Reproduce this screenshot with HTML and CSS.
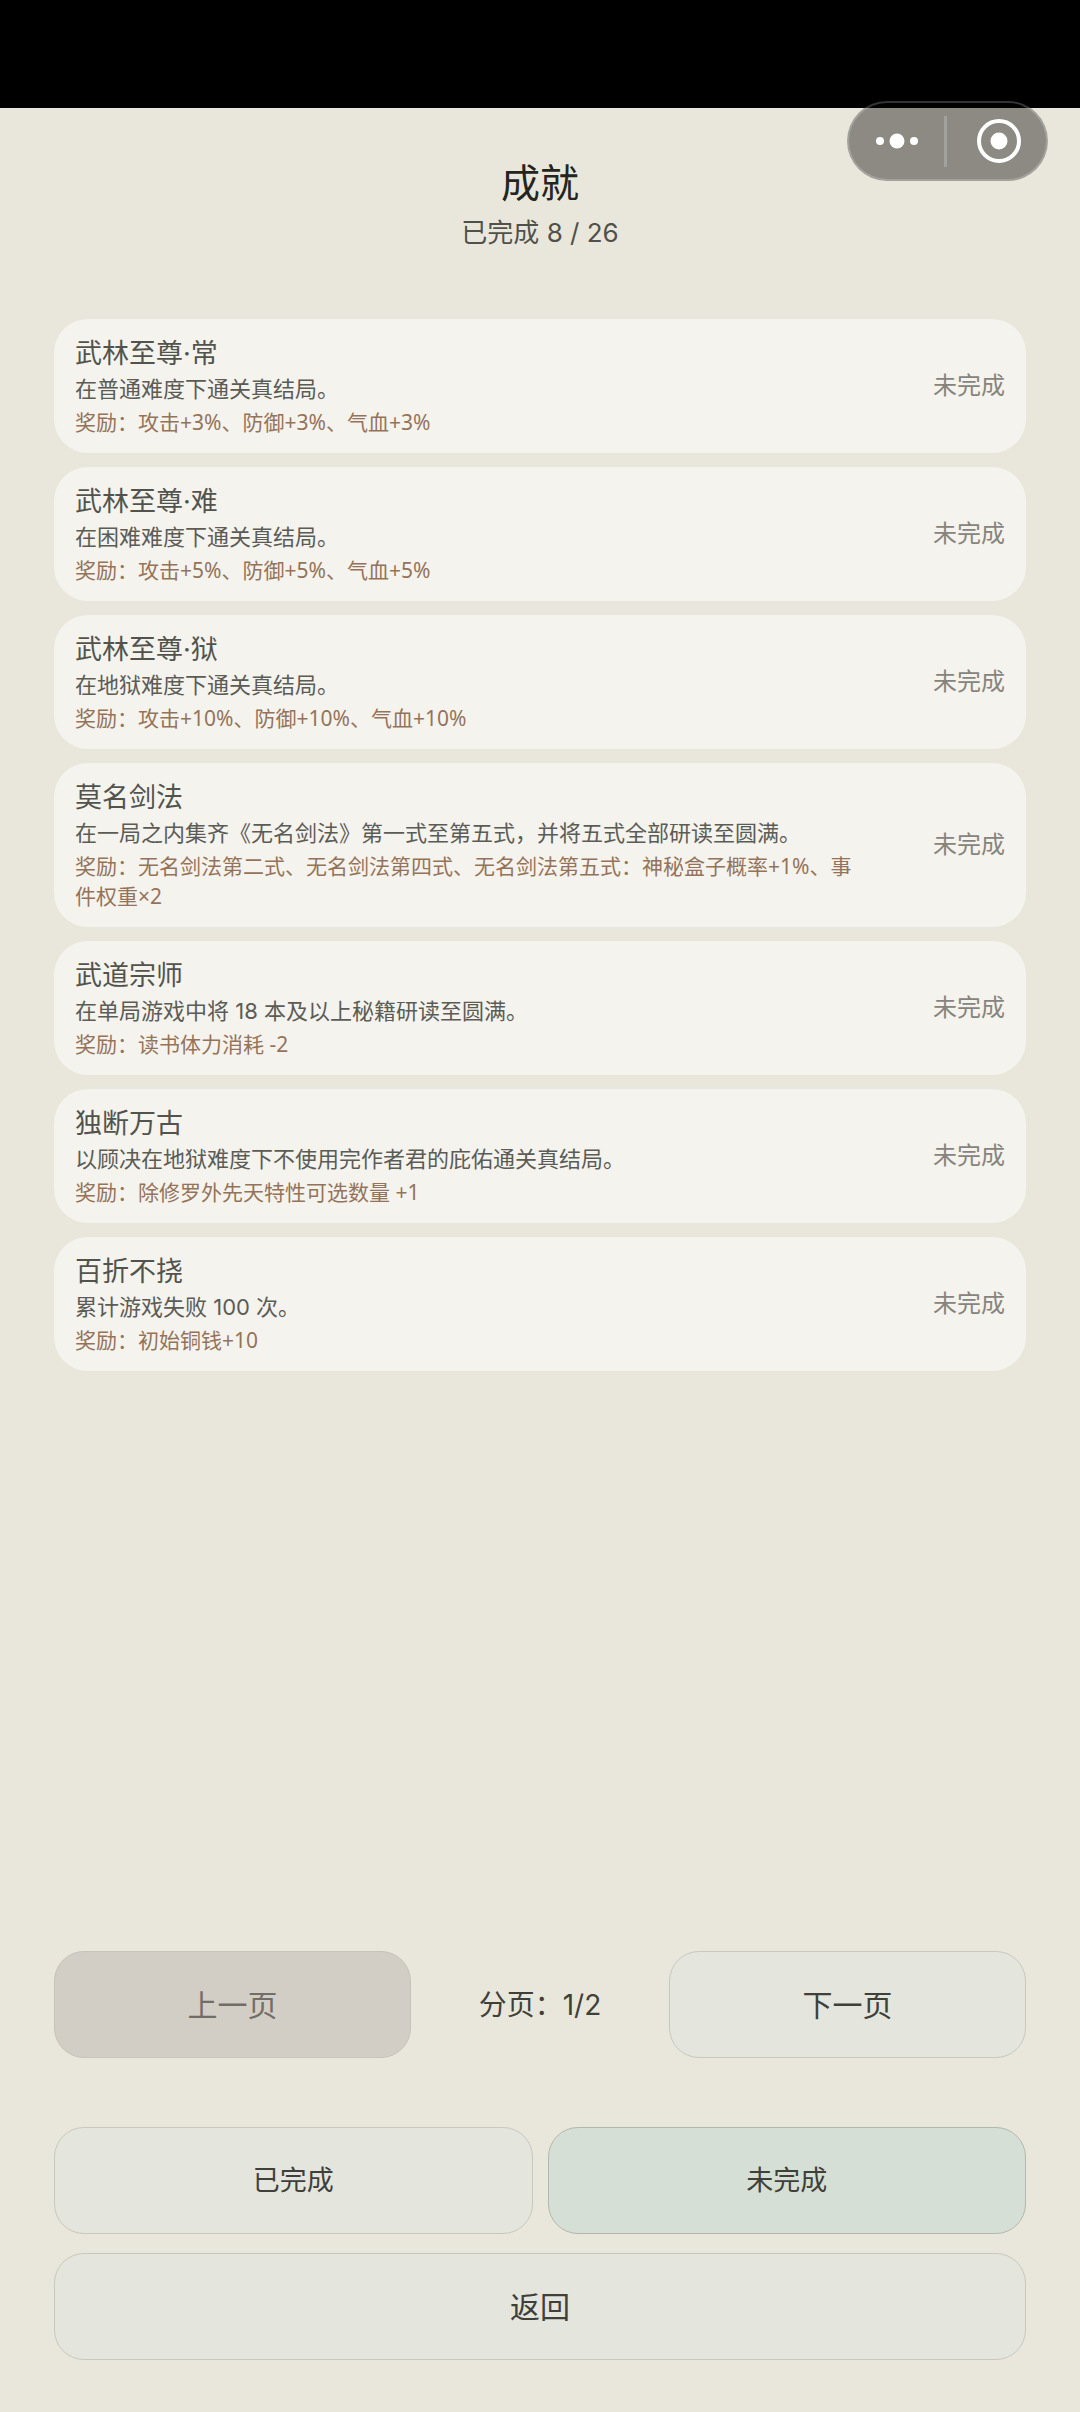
FILE: index.html
```
<!DOCTYPE html>
<html lang="zh-CN">
<head>
    <meta charset="UTF-8">
    <meta name="viewport" content="width=device-width, initial-scale=1.0">
    <title>成就</title>
    <link rel="stylesheet" href="styles.css">
</head>
<body>

<div class="status-bar"></div>

<!-- 小程序胶囊按钮 -->
<div class="capsule">
    <button class="capsule-btn" aria-label="更多">
        <svg width="44" height="16" viewBox="0 0 44 16" fill="#fff">
            <circle cx="5" cy="8" r="4"/>
            <circle cx="22" cy="8" r="7.5"/>
            <circle cx="39" cy="8" r="4"/>
        </svg>
    </button>
    <span class="capsule-line"></span>
    <button class="capsule-btn capsule-close" aria-label="关闭">
        <svg width="46" height="46" viewBox="0 0 46 46">
            <circle cx="23" cy="23" r="20" fill="none" stroke="#fff" stroke-width="4"/>
            <circle cx="23" cy="23" r="8.5" fill="#fff"/>
        </svg>
    </button>
</div>

<header class="header">
    <h1 class="page-title">成就</h1>
    <p class="progress">已完成 8 / 26</p>
</header>

<main class="achievement-list">
    <article class="card">
        <div class="card-info">
            <h2 class="card-title">武林至尊·常</h2>
            <p class="card-desc">在普通难度下通关真结局。</p>
            <p class="card-reward">奖励：攻击+3%、防御+3%、气血+3%</p>
        </div>
        <span class="card-status">未完成</span>
    </article>
    <article class="card">
        <div class="card-info">
            <h2 class="card-title">武林至尊·难</h2>
            <p class="card-desc">在困难难度下通关真结局。</p>
            <p class="card-reward">奖励：攻击+5%、防御+5%、气血+5%</p>
        </div>
        <span class="card-status">未完成</span>
    </article>
    <article class="card">
        <div class="card-info">
            <h2 class="card-title">武林至尊·狱</h2>
            <p class="card-desc">在地狱难度下通关真结局。</p>
            <p class="card-reward">奖励：攻击+10%、防御+10%、气血+10%</p>
        </div>
        <span class="card-status">未完成</span>
    </article>
    <article class="card">
        <div class="card-info">
            <h2 class="card-title">莫名剑法</h2>
            <p class="card-desc">在一局之内集齐《无名剑法》第一式至第五式，并将五式全部研读至圆满。</p>
            <p class="card-reward">奖励：无名剑法第二式、无名剑法第四式、无名剑法第五式：神秘盒子概率+1%、事件权重×2</p>
        </div>
        <span class="card-status">未完成</span>
    </article>
    <article class="card">
        <div class="card-info">
            <h2 class="card-title">武道宗师</h2>
            <p class="card-desc">在单局游戏中将 18 本及以上秘籍研读至圆满。</p>
            <p class="card-reward">奖励：读书体力消耗 -2</p>
        </div>
        <span class="card-status">未完成</span>
    </article>
    <article class="card">
        <div class="card-info">
            <h2 class="card-title">独断万古</h2>
            <p class="card-desc">以顾决在地狱难度下不使用完作者君的庇佑通关真结局。</p>
            <p class="card-reward">奖励：除修罗外先天特性可选数量 +1</p>
        </div>
        <span class="card-status">未完成</span>
    </article>
    <article class="card">
        <div class="card-info">
            <h2 class="card-title">百折不挠</h2>
            <p class="card-desc">累计游戏失败 100 次。</p>
            <p class="card-reward">奖励：初始铜钱+10</p>
        </div>
        <span class="card-status">未完成</span>
    </article>
</main>

<footer class="footer">
    <nav class="pager">
        <button class="btn" disabled>上一页</button>
        <span class="page-number">分页：1/2</span>
        <button class="btn">下一页</button>
    </nav>
    <div class="filters">
        <button class="btn btn-filter">已完成</button>
        <button class="btn btn-filter active">未完成</button>
    </div>
    <button class="btn btn-back">返回</button>
</footer>

</body>
</html>
```
FILE: styles.css
```
* {
    box-sizing: border-box;
    margin: 0;
    padding: 0;
}
body {
    display: flex;
    flex-direction: column;
    min-height: 100vh;
    background-color: #e9e7db;
    font-family: Inter, "Noto Sans CJK SC", sans-serif;
    color: #3f403a;
}
button {
    font-family: inherit;
    cursor: pointer;
}
.status-bar {
    height: 108px;
    background-color: #000000;
}

/* 悬浮在右上角的胶囊 */
.capsule {
    position: absolute;
    top: 101px;
    right: 32px;
    display: flex;
    align-items: center;
    width: 201px;
    height: 80px;
    border: 2px solid rgba(255, 255, 255, 0.2);
    border-radius: 40px;
    background-color: rgba(0, 0, 0, 0.4);
}
.capsule-btn {
    flex: 1;
    display: flex;
    align-items: center;
    justify-content: center;
    height: 100%;
    border: none;
    background: none;
}
.capsule-close {
    padding-left: 4px;
}
.capsule-line {
    width: 3px;
    height: 51px;
    background-color: rgba(255, 255, 255, 0.2);
}

.header {
    padding-top: 47px;
    text-align: center;
}
.page-title {
    font-size: 39px;
    font-weight: normal;
    line-height: 56px;
    color: #24251f;
}
.progress {
    font-size: 26px;
    line-height: 44px;
    color: #50514b;
}

.achievement-list {
    display: flex;
    flex-direction: column;
    gap: 14px;
    padding: 64px 5% 60px;
}
.card {
    display: flex;
    align-items: center;
    padding: 15px 21px 16px;
    border-radius: 34px;
    background-color: #f4f3ed;
}
.card-info {
    flex: 1;
}
.card-title {
    font-size: 27px;
    font-weight: normal;
    line-height: 39px;
    color: #52534d;
}
.card-desc {
    font-size: 22px;
    line-height: 32px;
    color: #5c5c57;
}
.card-reward {
    margin-top: 2px;
    font-family: "Noto Sans", "Noto Sans CJK SC", sans-serif;
    font-size: 21px;
    line-height: 30px;
    color: #94735a;
}
.card-status {
    width: 150px;
    font-size: 24px;
    line-height: 34px;
    text-align: right;
    color: #87847d;
}

.footer {
    margin-top: auto;
    padding: 0 5% 52px;
}
.btn {
    height: 107px;
    border: 1px solid #c9c8bf;
    border-radius: 30px;
    background-color: #e4e5dd;
    font-size: 30px;
    line-height: 42px;
    color: #3f403a;
}
.btn:disabled {
    border-color: #c6c3ba;
    background-color: #d2cec6;
    color: #726e67;
    cursor: default;
}
.pager {
    display: grid;
    grid-template-columns: 357px 1fr 357px;
    align-items: center;
    margin-bottom: 69px;
}
.page-number {
    font-size: 28px;
    line-height: 42px;
    text-align: center;
}
.filters {
    display: grid;
    grid-template-columns: 1fr 1fr;
    gap: 15px;
    margin-bottom: 19px;
}
.btn-filter {
    font-size: 27px;
}
.btn-filter.active {
    border-color: #b3b8ac;
    background-color: #d5dfd5;
}
.btn-back {
    display: block;
    width: 100%;
}
```
